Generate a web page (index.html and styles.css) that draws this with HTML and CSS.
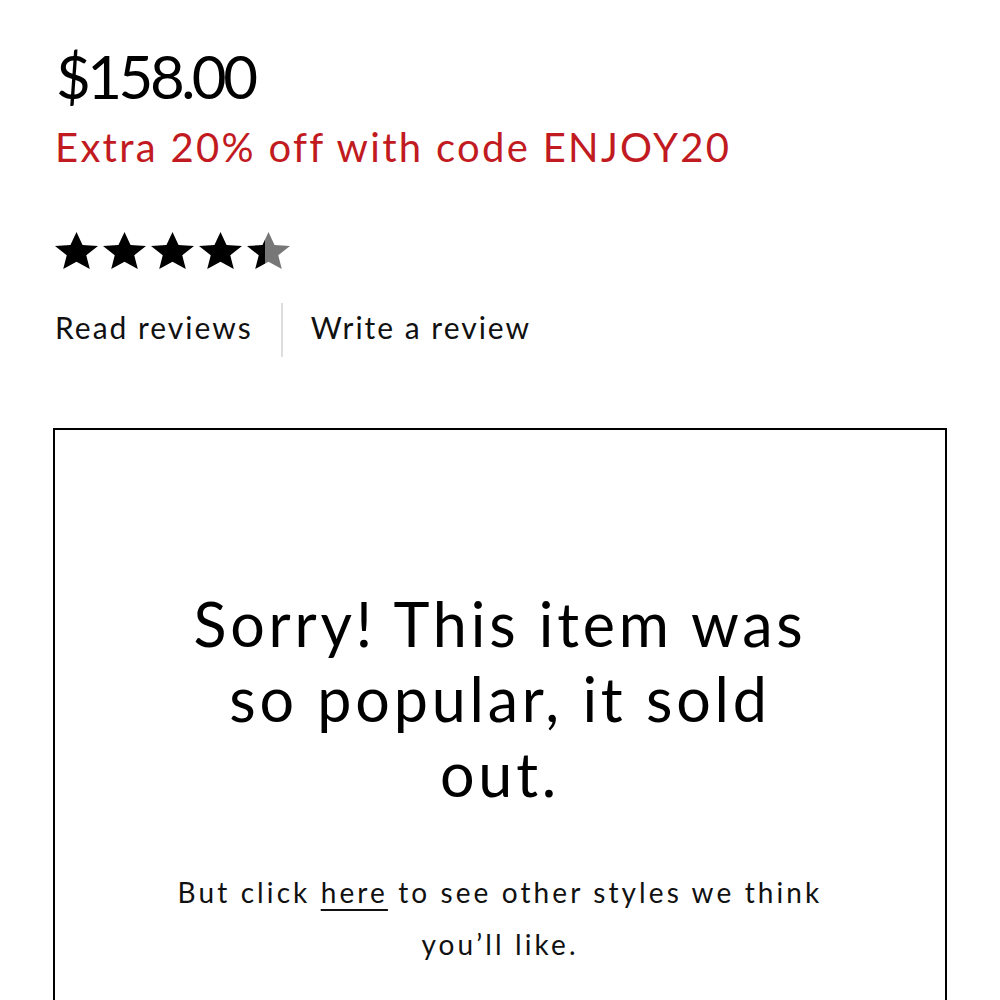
FILE: index.html
```html
<!DOCTYPE html>
<html>
<head>
<meta charset="utf-8">
<link rel="stylesheet" href="styles.css">
</head>
<body>
<div class="page">
  <div class="price">$158.00</div>
  <div class="promo">Extra 20% off with code ENJOY20</div>
  <div class="stars">
    <svg class="star" viewBox="2 2 20 19" preserveAspectRatio="none"><path d="M12 17.27L18.18 21l-1.64-7.030L22 9.24l-7.19-.61L12 2 9.19 8.63 2 9.24l5.46 4.73L5.82 21z" fill="#000"/></svg>
    <svg class="star" viewBox="2 2 20 19" preserveAspectRatio="none"><path d="M12 17.27L18.18 21l-1.64-7.03L22 9.24l-7.19-.61L12 2 9.19 8.63 2 9.24l5.46 4.73L5.82 21z" fill="#000"/></svg>
    <svg class="star" viewBox="2 2 20 19" preserveAspectRatio="none"><path d="M12 17.27L18.18 21l-1.64-7.03L22 9.24l-7.19-.61L12 2 9.19 8.63 2 9.24l5.46 4.73L5.82 21z" fill="#000"/></svg>
    <svg class="star" viewBox="2 2 20 19" preserveAspectRatio="none"><path d="M12 17.27L18.18 21l-1.64-7.03L22 9.24l-7.19-.61L12 2 9.19 8.63 2 9.24l5.46 4.73L5.82 21z" fill="#000"/></svg>
    <svg class="star" viewBox="2 2 20 19" preserveAspectRatio="none"><defs><linearGradient id="half" gradientUnits="userSpaceOnUse" x1="2" y1="0" x2="22" y2="0"><stop offset="41%" stop-color="#000"/><stop offset="41%" stop-color="#777"/></linearGradient></defs><path d="M12 17.27L18.18 21l-1.64-7.03L22 9.24l-7.19-.61L12 2 9.19 8.63 2 9.24l5.46 4.73L5.82 21z" fill="url(#half)"/></svg>
  </div>
  <div class="review-links">
    <a class="rlink" href="#">Read reviews</a>
    <span class="divider"></span>
    <a class="rlink" href="#">Write a review</a>
  </div>
  <div class="soldout">
    <h2 class="sorry">Sorry! This item was so popular, it sold out.</h2>
    <p class="other">But click <a href="#">here</a> to see other styles we think you’ll like.</p>
  </div>
</div>
</body>
</html>
```

FILE: styles.css
```css
html, body {
  margin: 0;
  padding: 0;
  background: #fff;
  overflow: hidden;
}
body {
  font-family: "Lato", "Open Sans", sans-serif;
  color: #111;
}
.page {
  padding: 40px 0 0 53px;
}
.price {
  font-size: 60px;
  line-height: 72px;
  font-weight: 400;
  color: #000;
  letter-spacing: -3.5px;
  padding-left: 3px;
}
.promo {
  margin-top: 10px;
  padding-left: 2px;
  font-size: 40px;
  line-height: 50px;
  color: #c11a21;
  letter-spacing: 2.3px;
}
.stars {
  display: flex;
  gap: 5px;
  margin-top: 60px;
  padding-left: 2px;
}
.star {
  width: 43px;
  height: 37px;
  display: block;
}
.review-links {
  display: flex;
  align-items: flex-start;
  margin-top: 34px;
  padding-left: 2px;
  height: 54px;
}
.rlink {
  font-size: 30px;
  line-height: 49px;
  color: #111;
  text-decoration: none;
  letter-spacing: 2px;
}
.divider {
  width: 2px;
  height: 54px;
  background: #ddd;
  margin: 0 28px 0 28px;
}
.soldout {
  margin-top: 71px;
  border: 2px solid #000;
  width: 894px;
  padding: 156px 20px 40px;
  box-sizing: border-box;
  text-align: center;
}
.sorry {
  margin: 0 auto;
  width: 650px;
  font-size: 61px;
  line-height: 75px;
  font-weight: 400;
  color: #000;
  letter-spacing: 3.8px;
}
.other {
  margin: 55px auto 0;
  width: 700px;
  font-size: 28px;
  line-height: 52px;
  color: #111;
  letter-spacing: 3.1px;
}
.other a {
  color: #111;
  text-decoration: underline;
  text-underline-offset: 6px;
  text-decoration-thickness: 2px;
}
```
